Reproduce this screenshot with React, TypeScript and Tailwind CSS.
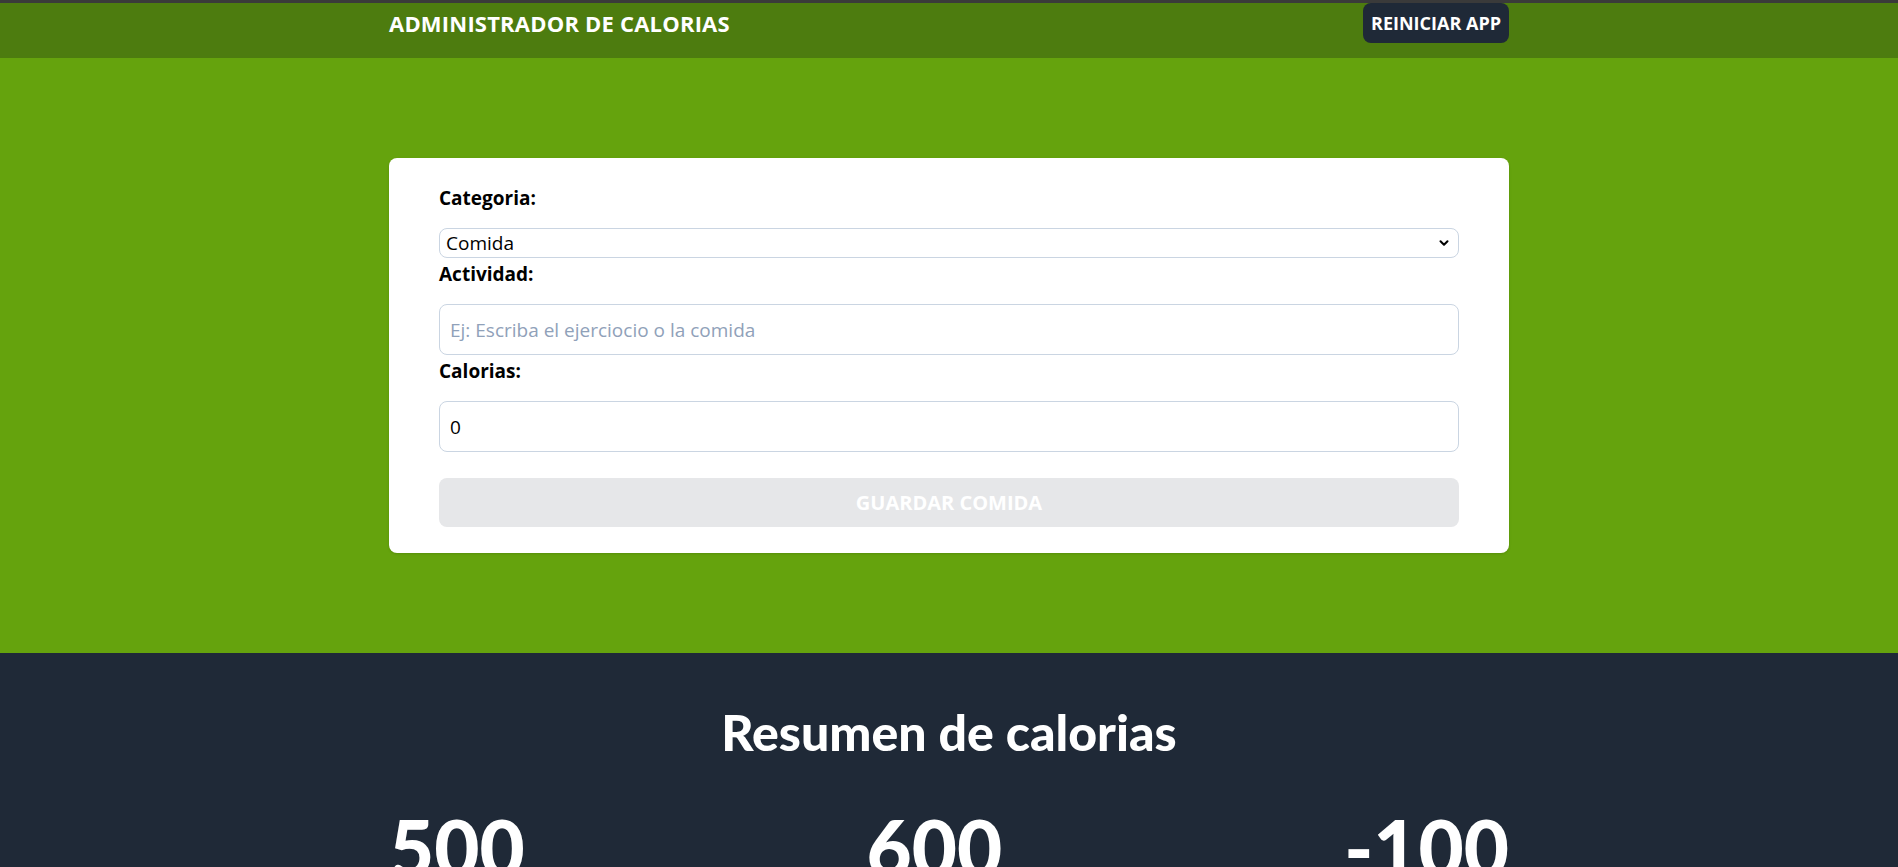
import { ChevronDown } from "lucide-react";

export default function App() {
  return (
    <div className="min-h-screen border-t-[3px] border-[#3a3a3a] bg-[#1f2937] font-['Open_Sans',sans-serif]">
      <header className="bg-[#4d7c0f] pb-[15px]">
        <div className="mx-auto flex max-w-[1120px] items-center justify-between">
          <h1 className="text-[22px] font-bold uppercase leading-7 tracking-[0.2px] text-white">
            Administrador de calorias
          </h1>
          <button className="rounded-lg bg-[#1f2937] px-2 py-2 text-lg font-bold uppercase leading-6 text-white">
            Reiniciar app
          </button>
        </div>
      </header>

      <section className="bg-[#65a30d] py-[100px]">
        <form className="mx-auto max-w-[1120px] rounded-lg bg-white px-[50px] py-[26px] shadow">
          <div className="flex flex-col">
            <label htmlFor="category" className="text-[19px] font-bold leading-7 text-black">
              Categoria:
            </label>
            <div className="relative mt-4">
              <select
                id="category"
                className="h-[30px] w-full appearance-none rounded-lg border border-slate-300 bg-white px-1.5 text-[19px] text-black"
                defaultValue="1"
              >
                <option value="1">Comida</option>
                <option value="2">Ejercicio</option>
              </select>
              <ChevronDown
                size={14}
                strokeWidth={3.5}
                className="pointer-events-none absolute right-[8px] top-[8px] text-black"
              />
            </div>
          </div>

          <div className="mt-[2px] flex flex-col">
            <label htmlFor="name" className="text-[19px] font-bold leading-7 text-black">
              Actividad:
            </label>
            <input
              id="name"
              type="text"
              placeholder="Ej: Escriba el ejerciocio o la comida"
              className="mt-4 h-[51px] rounded-lg border border-slate-300 px-2.5 text-[19px] text-black placeholder:text-slate-400"
            />
          </div>

          <div className="mt-[2px] flex flex-col">
            <label htmlFor="calories" className="text-[19px] font-bold leading-7 text-black">
              Calorias:
            </label>
            <input
              id="calories"
              type="number"
              defaultValue={0}
              className="mt-4 h-[51px] rounded-lg border border-slate-300 px-2.5 text-[19px] text-black"
            />
          </div>

          <button
            type="submit"
            disabled
            className="mt-[26px] h-[49px] w-full rounded-lg bg-[#e6e7e9] text-[20px] font-bold uppercase text-white"
          >
            Guardar comida
          </button>
        </form>
      </section>

      <section className="pt-[55px] font-['Lato',sans-serif]">
        <div className="mx-auto max-w-[1120px]">
          <h2 className="text-center text-[50px] font-black leading-[48px] text-white">Resumen de calorias</h2>
          <div className="mt-[52px] flex justify-between">
            <p className="text-[78px] font-black leading-none text-white">500</p>
            <p className="text-[78px] font-black leading-none text-white">600</p>
            <p className="text-[78px] font-black leading-none text-white">-100</p>
          </div>
        </div>
      </section>
    </div>
  );
}
